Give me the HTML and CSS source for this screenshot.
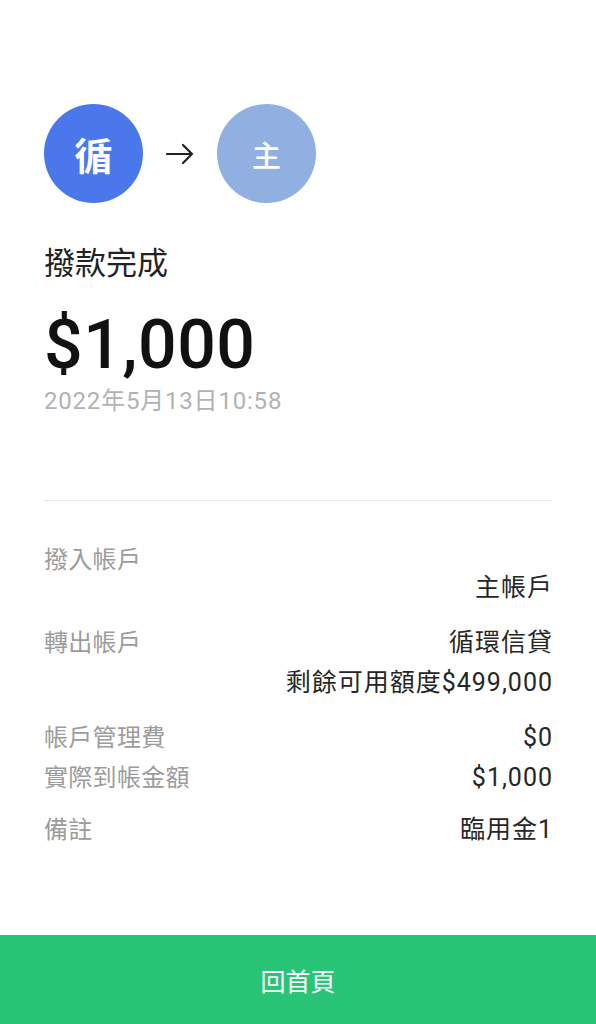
FILE: index.html
```html
<!DOCTYPE html>
<html lang="zh-Hant">
<head>
    <meta charset="UTF-8">
    <meta name="viewport" content="width=device-width, initial-scale=1.0">
    <title>撥款完成</title>
    <link rel="stylesheet" href="styles.css">
</head>
<body>
    <div class="page">
        <div class="content">
            <div class="flow">
                <div class="avatar from">循</div>
                <svg class="arrow" width="28" height="22" viewBox="0 0 28 22">
                    <path d="M1 11H26M17 2L26 11L17 20" fill="none" stroke="#222" stroke-width="2.2" stroke-linecap="round" stroke-linejoin="round"/>
                </svg>
                <div class="avatar to">主</div>
            </div>

            <div class="title">撥款完成</div>
            <div class="amount">$1,000</div>
            <div class="date">2022年5月13日10:58</div>

            <div class="divider"></div>

            <div class="details">
                <div class="row first">
                    <div class="label">撥入帳戶</div>
                    <div class="value pushed">
                        <div>主帳戶</div>
                    </div>
                </div>
                <div class="row">
                    <div class="label">轉出帳戶</div>
                    <div class="value">
                        <div>循環信貸</div>
                        <div>剩餘可用額度$499,000</div>
                    </div>
                </div>
                <div class="row">
                    <div class="label">帳戶管理費</div>
                    <div class="value"><div>$0</div></div>
                </div>
                <div class="row tight">
                    <div class="label">實際到帳金額</div>
                    <div class="value"><div>$1,000</div></div>
                </div>
                <div class="row note">
                    <div class="label">備註</div>
                    <div class="value"><div>臨用金1</div></div>
                </div>
            </div>
        </div>

        <button class="home-btn">回首頁</button>
    </div>
</body>
</html>
```

FILE: styles.css
```css
*, *::before, *::after {
    margin: 0;
    padding: 0;
    box-sizing: border-box;
}

body {
    font-family: Roboto, "Noto Sans CJK TC", sans-serif;
    background-color: #fff;
    color: #222;
}

.page {
    display: flex;
    flex-direction: column;
    height: 100vh;
}

.content {
    flex: 1;
    padding: 104px 44px 0;
}

.flow {
    display: flex;
    align-items: center;
    gap: 23px;

    .avatar {
        width: 99px;
        height: 99px;
        border-radius: 50%;
        display: flex;
        align-items: center;
        justify-content: center;
        color: #fff;
        font-family: "Noto Sans CJK TC", sans-serif;
    }

    .from {
        background-color: #4a77ea;
        font-size: 38px;
        font-weight: 700;
    }

    .to {
        background-color: #8fb0e0;
        font-size: 29px;
        font-weight: 500;
    }
}

.title {
    margin-top: 41px;
    font-size: 31px;
    line-height: 40px;
    color: #222;
}

.amount {
    margin-top: 21px;
    font-size: 68px;
    font-weight: 500;
    line-height: 80px;
    color: #111;
    letter-spacing: 0.5px;
}

.date {
    font-size: 24px;
    line-height: 32px;
    color: #b2b2b2;
    letter-spacing: 0.8px;
}

.divider {
    margin-top: 83px;
    height: 1px;
    background-color: #e6e6e6;
}

.details {
    padding-top: 39px;
    font-size: 25px;
    line-height: 40px;
    letter-spacing: 1px;

    .row {
        display: flex;
        justify-content: space-between;
        margin-top: 15px;
    }

    .row.first {
        margin-top: 0;
    }

    .row.tight {
        margin-top: 0;
    }

    .row.note {
        margin-top: 12px;
    }

    .label {
        color: #9c9c9c;
        font-size: 24px;
        letter-spacing: 0.3px;
    }

    .value {
        text-align: right;
        color: #262626;
        margin-right: -1px;
    }

    .pushed {
        padding-top: 28px;
    }
}

.home-btn {
    height: 89px;
    width: 100%;
    border: none;
    background-color: #28c576;
    color: #fff;
    font-family: "Noto Sans CJK TC", sans-serif;
    font-size: 25px;
    cursor: pointer;
}
```
